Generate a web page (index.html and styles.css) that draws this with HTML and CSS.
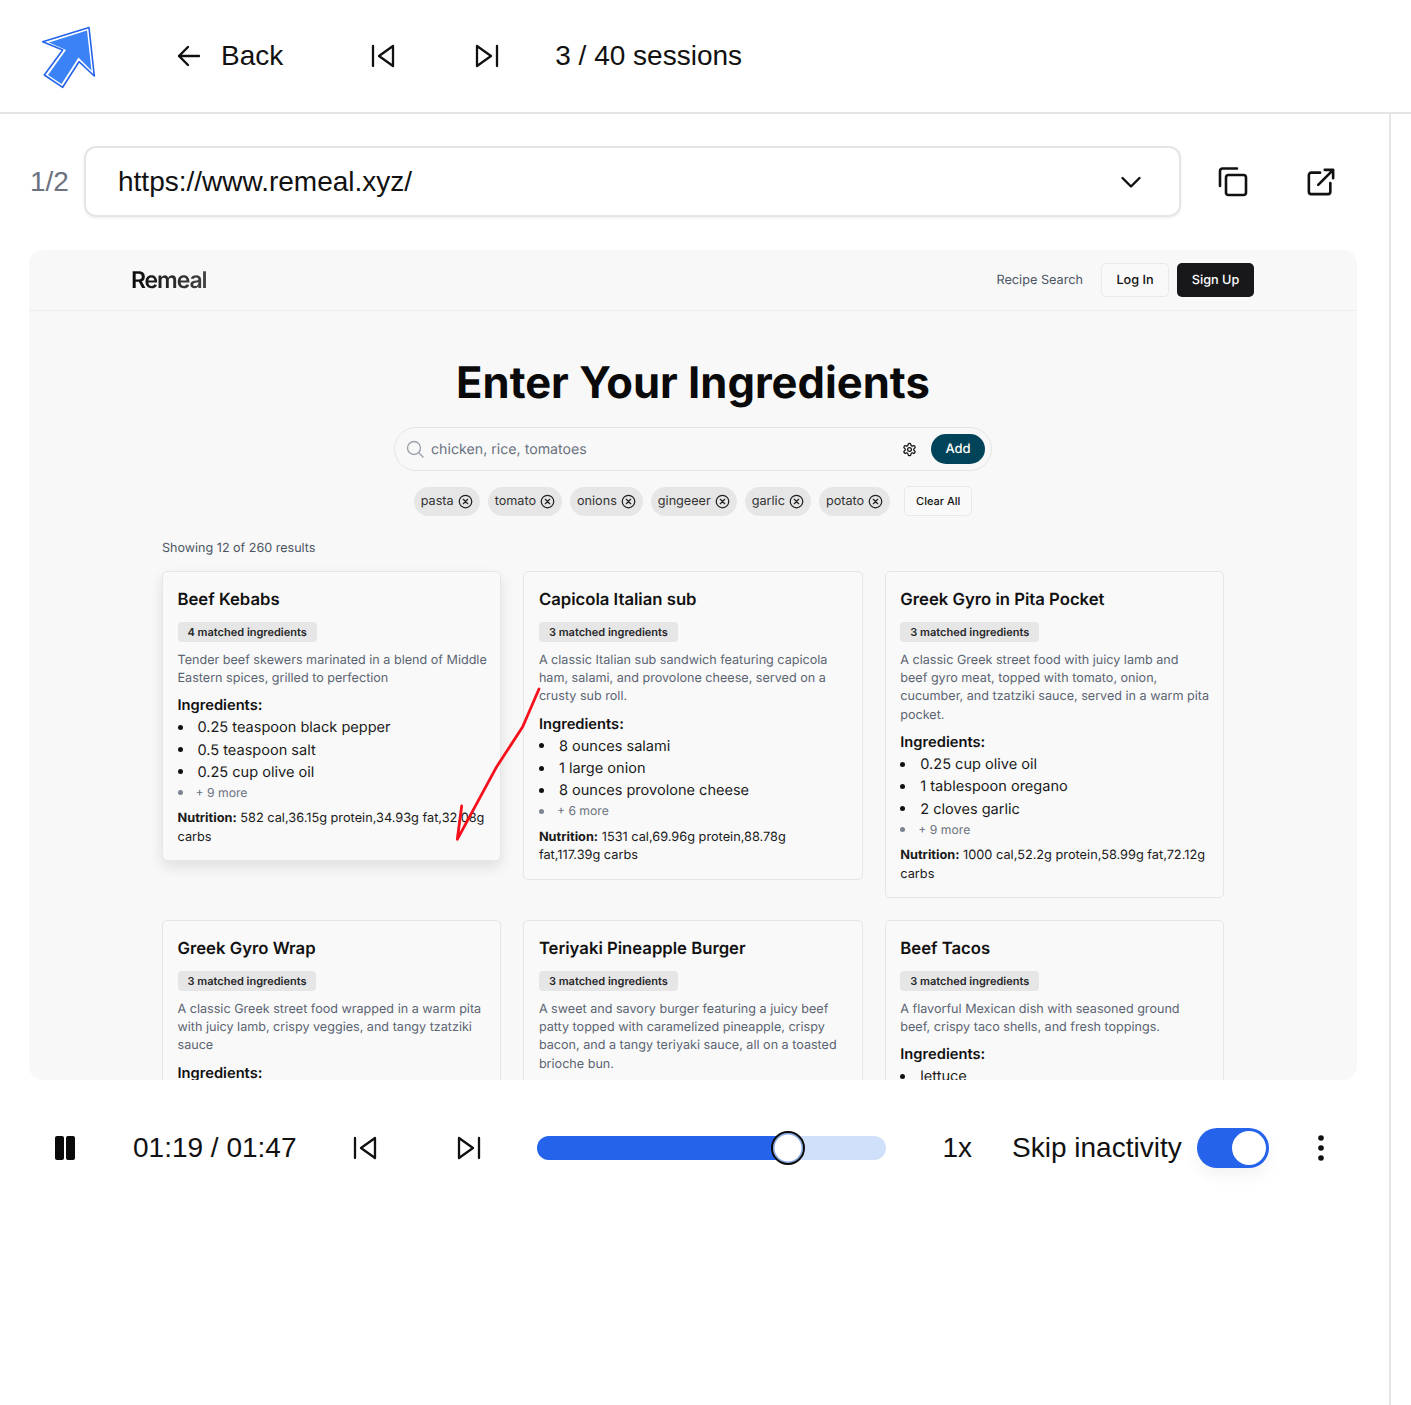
FILE: index.html
```html
<!DOCTYPE html>
<html lang="en">
<head>
    <meta charset="UTF-8">
    <meta name="viewport" content="width=device-width, initial-scale=1.0">
    <title>Session replay - Remeal</title>
    <link rel="stylesheet" href="styles.css">
</head>
<body>
    <header class="topbar">
        <svg class="logo" width="60" height="64" viewBox="40 25 60 64">
            <polygon points="89,27.5 42.7,41.7 62.7,50 44.3,75 62.7,87.3 79,61.7 94.3,76" fill="#fff" stroke="#2563eb" stroke-width="1.6" stroke-linejoin="round"/>
            <polygon points="87,30.5 49,42.5 66,50 48,75 61.5,84 78.5,57.5 91.5,70.5" fill="#3b82f6"/>
        </svg>
        <a class="back">
            <svg width="26" height="26" viewBox="0 0 26 26" fill="none" stroke="#111" stroke-width="2.4" stroke-linecap="round" stroke-linejoin="round"><path d="M23 13H3M12 4l-9 9 9 9"/></svg>
            Back
        </a>
        <svg class="skip-prev" width="24" height="24" viewBox="0 0 24 24" fill="none" stroke="#111" stroke-width="2.3" stroke-linecap="round" stroke-linejoin="round"><path d="M2 2v20M22 2 8 12l14 10z"/></svg>
        <svg class="skip-next" width="24" height="24" viewBox="0 0 24 24" fill="none" stroke="#111" stroke-width="2.3" stroke-linecap="round" stroke-linejoin="round"><path d="M22 2v20M2 2l14 10L2 22z"/></svg>
        <span class="session-count">3 / 40 sessions</span>
    </header>

    <main class="main">
        <div class="url-row">
            <span class="page-count">1/2</span>
            <div class="url-select">
                <span>https://www.remeal.xyz/</span>
                <svg width="24" height="24" viewBox="0 0 24 24" fill="none" stroke="#111" stroke-width="2.4" stroke-linecap="round" stroke-linejoin="round"><path d="M3.500 8 12 16.500 20.500 8"/></svg>
            </div>
            <svg class="copy-icon" width="32" height="32" viewBox="0 0 32 32" fill="none" stroke="#111" stroke-width="2.6" stroke-linecap="round" stroke-linejoin="round">
                <rect x="9" y="9" width="20" height="20" rx="2.500"/>
                <path d="M3 20V5a2.500 2.500 0 0 1 2.500-2.500H20"/>
            </svg>
            <svg class="open-icon" width="28" height="28" viewBox="0 0 30 30" fill="none" stroke="#111" stroke-width="2.800" stroke-linecap="round" stroke-linejoin="round">
                <path d="M14 5H4.500A2.500 2.500 0 0 0 2 7.500v18A2.500 2.500 0 0 0 4.500 28h18a2.500 2.500 0 0 0 2.500-2.500V16"/>
                <path d="M12 18 28 2M19 2h9v9"/>
            </svg>
        </div>

        <section class="replay">
            <nav class="site-nav">
                <span class="brand">Remeal</span>
                <div class="site-links">
                    <a class="site-link">Recipe Search</a>
                    <a class="btn btn-light">Log In</a>
                    <a class="btn btn-dark">Sign Up</a>
                </div>
            </nav>

            <h1 class="title">Enter Your Ingredients</h1>

            <div class="search">
                <svg width="18" height="18" viewBox="0 0 18 18" fill="none" stroke="#9ca3af" stroke-width="1.400" stroke-linecap="round"><circle cx="8" cy="8" r="6.500"/><path d="m13 13 4 4"/></svg>
                <span class="search-text">chicken, rice, tomatoes</span>
                <svg class="gear" width="15" height="15" viewBox="0 0 24 24" fill="none" stroke="#111" stroke-width="2" stroke-linecap="round" stroke-linejoin="round">
                    <path d="M12.200 2h-.4a2 2 0 0 0-2 2v.2a2 2 0 0 1-1 1.700l-.4.300a2 2 0 0 1-2 0l-.2-.1a2 2 0 0 0-2.700.7l-.2.400a2 2 0 0 0 .7 2.700l.2.100a2 2 0 0 1 1 1.700v.5a2 2 0 0 1-1 1.700l-.2.100a2 2 0 0 0-.7 2.700l.2.400a2 2 0 0 0 2.700.7l.2-.1a2 2 0 0 1 2 0l.4.300a2 2 0 0 1 1 1.700v.2a2 2 0 0 0 2 2h.4a2 2 0 0 0 2-2v-.2a2 2 0 0 1 1-1.700l.4-.3a2 2 0 0 1 2 0l.2.100a2 2 0 0 0 2.700-.7l.2-.4a2 2 0 0 0-.7-2.700l-.2-.1a2 2 0 0 1-1-1.700v-.5a2 2 0 0 1 1-1.700l.2-.1a2 2 0 0 0 .7-2.700l-.2-.4a2 2 0 0 0-2.700-.7l-.2.100a2 2 0 0 1-2 0l-.4-.3a2 2 0 0 1-1-1.700V4a2 2 0 0 0-2-2z"/>
                    <circle cx="12" cy="12" r="3"/>
                </svg>
                <span class="add-btn">Add</span>
            </div>

            <div class="chips">
                <span class="chip">pasta <svg class="chip-x" viewBox="0 0 24 24"><circle cx="12" cy="12" r="10"/><path d="m8.500 8.500 7 7M15.500 8.500l-7 7"/></svg></span>
                <span class="chip">tomato <svg class="chip-x" viewBox="0 0 24 24"><circle cx="12" cy="12" r="10"/><path d="m8.500 8.500 7 7M15.500 8.500l-7 7"/></svg></span>
                <span class="chip">onions <svg class="chip-x" viewBox="0 0 24 24"><circle cx="12" cy="12" r="10"/><path d="m8.500 8.500 7 7M15.500 8.500l-7 7"/></svg></span>
                <span class="chip">gingeeer <svg class="chip-x" viewBox="0 0 24 24"><circle cx="12" cy="12" r="10"/><path d="m8.500 8.500 7 7M15.500 8.500l-7 7"/></svg></span>
                <span class="chip">garlic <svg class="chip-x" viewBox="0 0 24 24"><circle cx="12" cy="12" r="10"/><path d="m8.500 8.500 7 7M15.500 8.500l-7 7"/></svg></span>
                <span class="chip">potato <svg class="chip-x" viewBox="0 0 24 24"><circle cx="12" cy="12" r="10"/><path d="m8.500 8.500 7 7M15.500 8.500l-7 7"/></svg></span>
                <span class="clear-all">Clear All</span>
            </div>

            <p class="results-count">Showing 12 of 260 results</p>

            <div class="cards">
                <article class="card card-hover">
                    <h3>Beef Kebabs</h3>
                    <span class="badge">4 matched ingredients</span>
                    <p class="desc">Tender beef skewers marinated in a blend of Middle Eastern spices, grilled to perfection</p>
                    <h4>Ingredients:</h4>
                    <ul>
                        <li>0.25 teaspoon black pepper</li>
                        <li>0.5 teaspoon salt</li>
                        <li>0.25 cup olive oil</li>
                        <li class="more">+ 9 more</li>
                    </ul>
                    <p class="nutrition"><b>Nutrition:</b> 582 cal,36.15g protein,34.93g fat,32.08g carbs</p>
                </article>
                <article class="card">
                    <h3>Capicola Italian sub</h3>
                    <span class="badge">3 matched ingredients</span>
                    <p class="desc">A classic Italian sub sandwich featuring capicola ham, salami, and provolone cheese, served on a crusty sub roll.</p>
                    <h4>Ingredients:</h4>
                    <ul>
                        <li>8 ounces salami</li>
                        <li>1 large onion</li>
                        <li>8 ounces provolone cheese</li>
                        <li class="more">+ 6 more</li>
                    </ul>
                    <p class="nutrition"><b>Nutrition:</b> 1531 cal,69.96g protein,88.78g fat,117.39g carbs</p>
                </article>
                <article class="card">
                    <h3>Greek Gyro in Pita Pocket</h3>
                    <span class="badge">3 matched ingredients</span>
                    <p class="desc">A classic Greek street food with juicy lamb and<br>beef gyro meat, topped with tomato, onion, cucumber, and tzatziki sauce, served in a warm pita pocket.</p>
                    <h4>Ingredients:</h4>
                    <ul>
                        <li>0.25 cup olive oil</li>
                        <li>1 tablespoon oregano</li>
                        <li>2 cloves garlic</li>
                        <li class="more">+ 9 more</li>
                    </ul>
                    <p class="nutrition"><b>Nutrition:</b> 1000 cal,52.2g protein,58.99g fat,72.12g carbs</p>
                </article>
                <article class="card">
                    <h3>Greek Gyro Wrap</h3>
                    <span class="badge">3 matched ingredients</span>
                    <p class="desc">A classic Greek street food wrapped in a warm pita with juicy lamb, crispy veggies, and tangy tzatziki sauce</p>
                    <h4>Ingredients:</h4>
                    <ul>
                        <li>lettuce</li>
                    </ul>
                </article>
                <article class="card">
                    <h3>Teriyaki Pineapple Burger</h3>
                    <span class="badge">3 matched ingredients</span>
                    <p class="desc">A sweet and savory burger featuring a juicy beef patty topped with caramelized pineapple, crispy bacon, and a tangy teriyaki sauce, all on a toasted brioche bun.</p>
                    <h4>Ingredients:</h4>
                </article>
                <article class="card">
                    <h3>Beef Tacos</h3>
                    <span class="badge">3 matched ingredients</span>
                    <p class="desc">A flavorful Mexican dish with seasoned ground<br>beef, crispy taco shells, and fresh toppings.</p>
                    <h4>Ingredients:</h4>
                    <ul>
                        <li>lettuce</li>
                    </ul>
                </article>
            </div>

            <!-- mouse trail drawn over the recording -->
            <svg class="mouse-trail" width="100" height="170" viewBox="0 0 100 170" fill="none" stroke="#f5101c" stroke-width="2.800" stroke-linecap="round" stroke-linejoin="round">
                <path d="M93 4 76.700 41.700 50.700 81.700 11.300 154.300 15.700 121"/>
            </svg>
        </section>

        <div class="controls">
            <span class="pause"><i></i><i></i></span>
            <span class="time">01:19 / 01:47</span>
            <svg class="ctl-prev" width="24" height="24" viewBox="0 0 24 24" fill="none" stroke="#111" stroke-width="2.300" stroke-linecap="round" stroke-linejoin="round"><path d="M2 2v20M22 2 8 12l14 10z"/></svg>
            <svg class="ctl-next" width="24" height="24" viewBox="0 0 24 24" fill="none" stroke="#111" stroke-width="2.300" stroke-linecap="round" stroke-linejoin="round"><path d="M22 2v20M2 2l14 10L2 22z"/></svg>
            <div class="slider">
                <div class="slider-fill"></div>
                <span class="slider-thumb"></span>
            </div>
            <span class="speed">1x</span>
            <span class="skip-label">Skip inactivity</span>
            <span class="toggle"><span class="toggle-knob"></span></span>
            <svg class="more-icon" width="8" height="28" viewBox="0 0 8 28" fill="#111"><circle cx="4" cy="4" r="2.800"/><circle cx="4" cy="14" r="2.800"/><circle cx="4" cy="24" r="2.800"/></svg>
        </div>
    </main>
</body>
</html>
```

FILE: styles.css
```css
* { box-sizing: border-box; }
html, body { height: 100%; }
body { margin: 0; background: #fff; color: #111; font-family: "Liberation Sans", Arial, sans-serif; overflow: hidden; }

.topbar { height: 114px; border-bottom: 2px solid #e5e5e5; display: flex; align-items: center; padding: 2px 0 0 40px; font-size: 28px; }
.logo { flex: none; }
.back { display: flex; align-items: center; gap: 19px; margin-left: 76px; margin-top: -2px; }
.skip-prev { margin-left: 88px; margin-top: -2px; }
.skip-next { margin-left: 80px; margin-top: -2px; }
.session-count { margin-left: 56px; margin-top: -2px; }

.main { width: 1391px; height: 1291px; border-right: 2px solid #e5e5e5; padding: 32px 0 0 29px; }

.url-row { display: flex; align-items: center; height: 71px; }
.page-count { width: 55px; padding-left: 1px; font-size: 28px; color: #6b7280; }
.url-select { width: 1097px; height: 71px; border: 2px solid #e5e5e5; border-radius: 12px; box-shadow: 0 1px 3px rgba(0,0,0,0.08); display: flex; align-items: center; justify-content: space-between; padding: 0 36px 0 32px; font-size: 28px; }
.copy-icon { margin-left: 36px; }
.open-icon { margin-left: 58px; }

.replay { position: relative; width: 1328px; height: 830px; margin-top: 33px; background: #f8f8f8; border-radius: 14px; overflow: hidden; font-family: Inter, "Liberation Sans", sans-serif; text-rendering: geometricPrecision; }

.site-nav { height: 61px; border-bottom: 1px solid #efefef; display: flex; align-items: center; justify-content: space-between; padding: 0 103px 0 102px; }
.brand { font-size: 23px; font-weight: 600; letter-spacing: -1.100px; background: linear-gradient(90deg, #0a0a0a, #444); -webkit-background-clip: text; background-clip: text; color: transparent; }
.site-links { display: flex; align-items: center; font-size: 12.700px; font-weight: 500; }
.site-link { color: #4b5563; margin-right: 18px; font-weight: 400; }
.btn { height: 34px; display: flex; align-items: center; justify-content: center; border-radius: 5px; }
.btn-light { width: 68px; border: 1px solid #e9e9e9; background: #f9f9f9; margin-right: 8px; }
.btn-dark { width: 77px; background: #18181b; color: #fff; }

.title { margin: 46px 0 0; text-align: center; font-size: 43.550px; line-height: 52px; font-weight: 700; color: #0a0a0a; }

.search { width: 598px; height: 44px; margin: 18px auto 0; border: 1px solid #e6e6e6; border-radius: 22px; display: flex; align-items: center; padding: 0 6px 0 11px; font-size: 14.200px; }
.search-text { flex: 1; margin-left: 7px; color: #6b7280; }
.gear { margin-right: 14px; }
.add-btn { width: 54px; height: 30px; border-radius: 15px; background: #014359; color: #fff; font-size: 13px; font-weight: 500; display: flex; align-items: center; justify-content: center; }

.chips { display: flex; align-items: center; justify-content: center; gap: 8px; margin-top: 15px; }
.chip { height: 29px; padding: 0 7px; border-radius: 15px; background: #e6e6e6; font-size: 12.650px; color: #333; display: flex; align-items: center; gap: 4px; }
.chip-x { width: 15px; height: 15px; fill: none; stroke: #222; stroke-width: 2; stroke-linecap: round; }
.clear-all { height: 30px; margin-left: 6px; padding: 0 11px; border: 1px solid #e9e9e9; border-radius: 5px; font-size: 11px; font-weight: 500; display: flex; align-items: center; background: #f9f9f9; }

.results-count { margin: 24px 0 0 133px; font-size: 12.570px; line-height: 18px; color: #4b5563; }

.cards { display: grid; grid-template-columns: repeat(3, 339.400px); column-gap: 22px; row-gap: 22px; align-items: start; margin: 13px 0 0 133px; }
.card { border: 1px solid #e6e6e6; border-radius: 5px; padding: 16px 14px 13px 14.500px; background: #f9f9f9; }
.card-hover { box-shadow: 0 6px 14px rgba(0,0,0,0.1); }
.card h3 { margin: 0; font-size: 16.700px; line-height: 25px; font-weight: 600; color: #111; }
.badge { display: inline-block; margin-top: 9px; height: 20px; padding: 0 10px; border-radius: 4px; background: #e6e6e6; font-size: 11px; line-height: 20px; font-weight: 600; color: #27272a; vertical-align: top; }
.desc { margin: 9.500px -4px 0 0; font-size: 12.600px; line-height: 18.400px; color: #5b6472; }
.card h4 { margin: 6px 0 0; font-size: 14.700px; line-height: 22px; font-weight: 600; color: #111; }
.card ul { margin: 0; padding: 0; list-style: none; font-size: 14.550px; line-height: 22.200px; color: #1a1a1a; }
.card li { display: flex; align-items: center; gap: 15px; }
.card li::before { content: ""; flex: none; width: 5px; height: 5px; border-radius: 50%; background: #111; }
.card li.more { margin-top: 1px; font-size: 12.200px; line-height: 17.500px; color: #6b7280; gap: 13px; }
.card li.more::before { background: #7c8493; }
.nutrition { margin: 9px 0 0; font-size: 12.750px; line-height: 18.400px; color: #1a1a1a; }
.nutrition b { font-weight: 700; }

.mouse-trail { position: absolute; left: 417px; top: 435px; }

.controls { display: flex; align-items: center; height: 40px; margin-top: 48px; font-size: 28px; }
.pause { display: flex; gap: 2px; margin-left: 26px; }
.pause i { width: 9px; height: 24px; border-radius: 2px; background: #0a0a0a; }
.time { margin-left: 58px; }
.ctl-prev { margin-left: 57px; }
.ctl-next { margin-left: 80px; }
.slider { position: relative; width: 349px; height: 24px; margin-left: 56px; background: #d0dffa; border-radius: 12px; }
.slider-fill { width: 251px; height: 24px; background: #2563eb; border-radius: 12px 0 0 12px; }
.slider-thumb { position: absolute; left: 234px; top: -5px; width: 34px; height: 34px; border: 2px solid #0a0a0a; border-radius: 50%; background: #fff; box-shadow: inset 0 0 0 1.500px #86a8ee; }
.speed { margin-left: 56px; }
.skip-label { margin-left: 40px; }
.toggle { position: relative; width: 72px; height: 40px; margin-left: 15px; background: #2563eb; border-radius: 20px; box-shadow: 0 8px 16px rgba(0,0,0,0.05); }
.toggle-knob { position: absolute; right: 3px; top: 3px; width: 34px; height: 34px; border-radius: 50%; background: #fff; }
.more-icon { margin-left: 48px; }
```
